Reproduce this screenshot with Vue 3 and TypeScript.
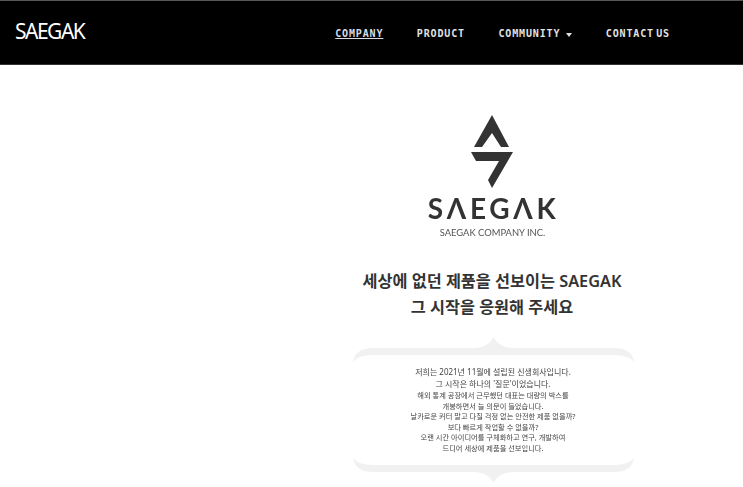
<template>
  <div class="page">
    <header class="topbar">
      <a class="brand">SAEGAK</a>
      <nav class="menu">
        <a class="menu-link active">COMPANY</a>
        <a class="menu-link">PRODUCT</a>
        <a class="menu-link">COMMUNITY<span class="caret" /></a>
        <a class="menu-link">CONTACT US</a>
      </nav>
    </header>

    <main class="content">
      <section class="intro">
        <div class="logo">
          <svg class="mark" width="42" height="74" viewBox="0 0 42 74">
            <path d="M21 0 L38 32 L30 32 L21 18 L11 32 L3 32 Z" fill="#333" />
            <path d="M0 37 L42 37 L21 73 L17 65 L28 46 L5 46 Z" fill="#333" />
          </svg>
          <div class="wordmark">SΛEGΛK</div>
          <div class="company">SAEGAK COMPANY INC.</div>
        </div>

        <h1 class="headline">세상에 없던 제품을 선보이는 SAEGAK<br />그 시작을 응원해 주세요</h1>

        <div class="story">
          <svg class="frame" width="281" height="146" viewBox="0 0 281 146">
            <path
              fill="#f1f1f1"
              d="M0 25 Q2 11 20 11 L120 11 Q135 11 140.500 0 Q146 11 161 11 L261 11 Q279 11 281 25 Q276 18 261 18 L20 18 Q5 18 0 25 Z"
            />
            <path
              fill="#f1f1f1"
              d="M0 121 Q5 128 20 128 L261 128 Q276 128 281 121 Q279 135 261 135 L161 135 Q146 135 140.500 146 Q135 135 120 135 L20 135 Q2 135 0 121 Z"
            />
          </svg>
          <div class="story-text">
            <p v-for="line in bigLines" :key="line" class="big">{{ line }}</p>
            <p v-for="line in smallLines" :key="line">{{ line }}</p>
          </div>
        </div>
      </section>
    </main>
  </div>
</template>

<script setup lang="ts">
const bigLines: string[] = [
  '저희는 2021년 11월에 설립된 신생회사입니다.',
  "그 시작은 하나의 '질문'이었습니다.",
]

const smallLines: string[] = [
  '해외 통계 공장에서 근무했던 대표는 대량의 박스를',
  '개봉하면서 늘 의문이 들었습니다.',
  '날카로운 커터 말고 다칠 걱정 없는 안전한 제품 없을까?',
  '보다 빠르게 작업할 수 없을까?',
  '오랜 시간 아이디어를 구체화하고 연구, 개발하여',
  '드디어 세상에 제품을 선보입니다.',
]
</script>

<style>
html,
body {
  margin: 0;
  background: #fff;
}
</style>

<style scoped>
.page {
  height: 487px;
  overflow: hidden;
  font-family: "Noto Sans", "Noto Sans CJK KR", sans-serif;
}

.topbar {
  display: flex;
  align-items: center;
  justify-content: space-between;
  box-sizing: border-box;
  height: 65px;
  padding: 0 73px 0 15px;
  background: #000;
  border-top: 1px solid #555;
  border-bottom: 1px solid #333;
}

.brand {
  margin-top: -3px;
  color: #fff;
  font-size: 21px;
  letter-spacing: -1.500px;
}

.menu {
  display: flex;
  gap: 33.500px;
  margin-top: 2px;
}

.menu-link {
  color: #e2e2e2;
  font-family: "DejaVu Sans Mono", monospace;
  font-size: 10px;
  font-weight: 700;
  letter-spacing: 0.850px;
  word-spacing: -4.500px;
}

.menu-link.active {
  color: #d5dce6;
  text-decoration: underline;
}

.caret {
  display: inline-block;
  margin-left: 6px;
  vertical-align: 0;
  border-top: 4px solid #e2e2e2;
  border-left: 3px solid transparent;
  border-right: 3px solid transparent;
}

.content {
  display: flex;
  justify-content: flex-end;
  padding-right: 101px;
}

.intro {
  display: flex;
  flex-direction: column;
  align-items: center;
  width: 300px;
  padding-top: 50px;
}

.logo {
  display: flex;
  flex-direction: column;
  align-items: center;
  color: #333;
  filter: blur(0.3px);
}

.mark {
  display: block;
}

.wordmark {
  margin: 2px 0 0 3px;
  font-family: Lato, sans-serif;
  font-size: 28px;
  font-weight: 700;
  line-height: 34px;
  letter-spacing: 3.700px;
}

.company {
  margin: 1px 0 0 1px;
  font-family: Lato, sans-serif;
  font-size: 9.400px;
  line-height: 14px;
  color: #555;
}

.headline {
  margin: 28px 0 0;
  color: #333;
  font-size: 16.300px;
  font-weight: 600;
  line-height: 26px;
  text-align: center;
}

.story {
  position: relative;
  box-sizing: border-box;
  width: 281px;
  height: 146px;
  margin: 17px 0 0 3px;
  padding: 29px 1px 0 0;
}

.frame {
  position: absolute;
  top: 0;
  left: 0;
}

.story-text {
  position: relative;
  color: #444;
  font-size: 7.260px;
  line-height: 10.500px;
  text-align: center;
  filter: blur(0.3px);
}

.story-text p {
  margin: 0;
}

.story-text .big {
  font-size: 8px;
  line-height: 12px;
}
</style>
